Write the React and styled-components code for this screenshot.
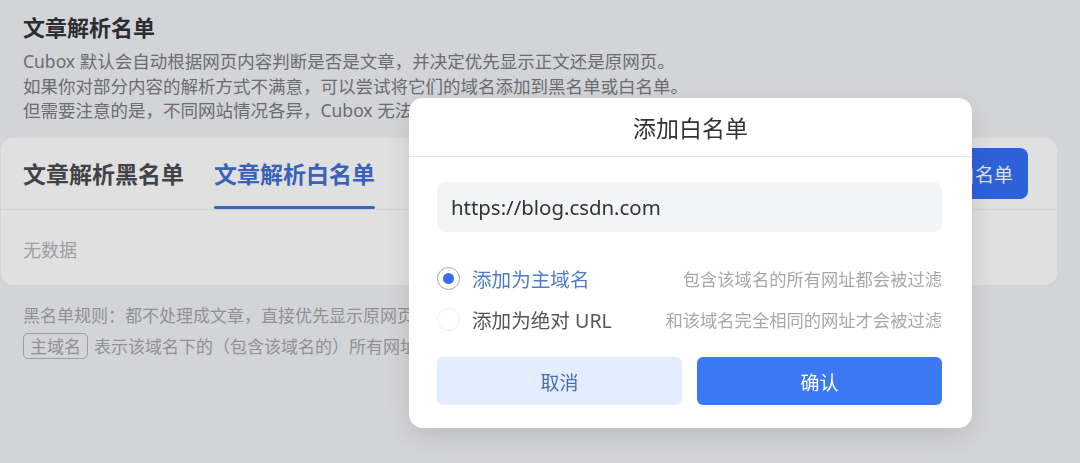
import React from "react";
import styled, { createGlobalStyle, css } from "styled-components";

const FONT = `"Noto Sans", "Noto Sans CJK SC", sans-serif`;

const GlobalStyle = createGlobalStyle`
  html, body {
    margin: 0;
    padding: 0;
    width: 1080px;
    height: 463px;
    overflow: hidden;
    background: #f1f2f5;
    font-family: ${FONT};
  }
  * { box-sizing: border-box; }
`;

const Page = styled.div`
  padding-top: 11px;
  width: 1080px;
  height: 463px;
`;

const Intro = styled.section`
  padding-left: 23px;
`;

const Title = styled.h1`
  margin: 0;
  font-size: 22px;
  line-height: 30px;
  font-weight: 700;
  color: #333437;
  font-family: "Noto Sans CJK SC", sans-serif;
`;

const Desc = styled.p`
  margin: 8px 0 0;
  font-size: 17.5px;
  line-height: 24.5px;
  color: #7a7b80;
  white-space: nowrap;
`;

const Card = styled.div`
  margin: 15px 0 0 1px;
  width: 1056px;
  background: #ffffff;
  border-radius: 12px;
  overflow: hidden;
`;

const TabBar = styled.div`
  height: 72px;
  border-bottom: 1px solid #f0f0f2;
  display: flex;
  align-items: stretch;
  justify-content: space-between;
  padding: 0 29px 0 22px;
`;

const Tabs = styled.div`
  display: flex;
  gap: 30px;
`;

const Tab = styled.div`
  position: relative;
  display: flex;
  align-items: center;
  font-family: "Noto Sans CJK SC", sans-serif;
  font-size: 23px;
  font-weight: 700;
  color: #4c4d52;
  ${(p) =>
    p.$active &&
    css`
      color: #4270d1;
      &::after {
        content: "";
        position: absolute;
        left: 0;
        right: 0;
        bottom: 0;
        height: 3px;
        border-radius: 2px;
        background: #4270d1;
      }
    `}
`;

const AddButton = styled.button`
  align-self: center;
  height: 51px;
  padding: 0 15px;
  border: none;
  border-radius: 8px;
  background: #336ff5;
  color: #ffffff;
  font-family: "Noto Sans CJK SC", sans-serif;
  font-size: 19px;
`;

const CardBody = styled.div`
  height: 75px;
  padding: 28px 0 0 22px;
  font-size: 18px;
  line-height: 24px;
  color: #b6b6ba;
`;

const Rules = styled.div`
  margin-top: 17px;
  padding-left: 23px;
  display: flex;
  flex-direction: column;
  gap: 5px;
  font-size: 17px;
  color: #a5a6aa;
  font-family: "Noto Sans CJK SC", sans-serif;
`;

const RuleLine = styled.div`
  display: flex;
  align-items: center;
  height: 26px;
  white-space: nowrap;
`;

const Tag = styled.span`
  display: inline-flex;
  align-items: center;
  height: 26px;
  padding: 0 6px;
  margin-right: 6px;
  border: 1px solid #b3b4b8;
  border-radius: 5px;
`;

const Overlay = styled.div`
  position: fixed;
  inset: 0;
  background: rgba(0, 0, 0, 0.12);
`;

const Modal = styled.div`
  position: absolute;
  left: 409px;
  top: 98px;
  width: 563px;
  background: #ffffff;
  border-radius: 14px;
  box-shadow: 0 8px 28px rgba(0, 0, 0, 0.12);
  overflow: hidden;
`;

const ModalHeader = styled.div`
  height: 59px;
  border-bottom: 1px solid #e6e6e8;
  display: flex;
  align-items: center;
  justify-content: center;
  font-family: "Noto Sans CJK SC", sans-serif;
  font-size: 23px;
  color: #333333;
`;

const ModalBody = styled.div`
  padding: 25px 30px 23px 28px;
`;

const UrlInput = styled.input`
  display: block;
  width: 100%;
  height: 50px;
  padding: 0 14px;
  border: none;
  outline: none;
  border-radius: 8px;
  background: #f3f4f6;
  font-family: ${FONT};
  font-size: 20.4px;
  color: #333333;
`;

const Options = styled.div`
  margin-top: 25.5px;
  display: flex;
  flex-direction: column;
`;

const Option = styled.label`
  height: 41px;
  display: flex;
  align-items: center;
  justify-content: space-between;
`;

const OptionMain = styled.span`
  display: flex;
  align-items: center;
  gap: 12px;
  font-size: 19.6px;
  color: ${(p) => (p.$checked ? "#4d7ccb" : "#555559")};
`;

const Radio = styled.span`
  position: relative;
  width: 23px;
  height: 23px;
  border-radius: 50%;
  border: 1.5px solid ${(p) => (p.$checked ? "#a2a7ae" : "#f0f0f2")};
  ${(p) =>
    p.$checked &&
    css`
      &::after {
        content: "";
        position: absolute;
        left: 50%;
        top: 50%;
        width: 11px;
        height: 11px;
        margin: -5.5px 0 0 -5.5px;
        border-radius: 50%;
        background: #3b6ee6;
      }
    `}
`;

const OptionHint = styled.span`
  font-family: "Noto Sans CJK SC", sans-serif;
  font-size: 17.3px;
  color: #a8a8ab;
`;

const Actions = styled.div`
  margin-top: 17.5px;
  display: flex;
  gap: 15px;
`;

const ActionButton = styled.button`
  flex: 1;
  height: 48px;
  border: none;
  border-radius: 6px;
  font-family: "Noto Sans CJK SC", sans-serif;
  font-size: 19px;
  background: ${(p) => (p.$primary ? "#3b78f2" : "#e4edfb")};
  color: ${(p) => (p.$primary ? "#ffffff" : "#4a6fae")};
`;

const options = [
  { label: "添加为主域名", hint: "包含该域名的所有网址都会被过滤", checked: true },
  { label: "添加为绝对 URL", hint: "和该域名完全相同的网址才会被过滤", checked: false },
];

export default function App() {
  return (
    <>
      <GlobalStyle />
      <Page>
        <Intro>
          <Title>文章解析名单</Title>
          <Desc>
            Cubox 默认会自动根据网页内容判断是否是文章，并决定优先显示正文还是原网页。
            <br />
            如果你对部分内容的解析方式不满意，可以尝试将它们的域名添加到黑名单或白名单。
            <br />
            但需要注意的是，不同网站情况各异，Cubox 无法保证所有网页都能正确解析。
          </Desc>
        </Intro>
        <Card>
          <TabBar>
            <Tabs>
              <Tab>文章解析黑名单</Tab>
              <Tab $active>文章解析白名单</Tab>
            </Tabs>
            <AddButton>添加白名单</AddButton>
          </TabBar>
          <CardBody>无数据</CardBody>
        </Card>
        <Rules>
          <RuleLine>黑名单规则：都不处理成文章，直接优先显示原网页。</RuleLine>
          <RuleLine>
            <Tag>主域名</Tag>表示该域名下的（包含该域名的）所有网址。
          </RuleLine>
        </Rules>
      </Page>
      <Overlay>
        <Modal>
          <ModalHeader>添加白名单</ModalHeader>
          <ModalBody>
            <UrlInput readOnly value="https://blog.csdn.com" />
            <Options>
              {options.map((o) => (
                <Option key={o.label}>
                  <OptionMain $checked={o.checked}>
                    <Radio $checked={o.checked} />
                    {o.label}
                  </OptionMain>
                  <OptionHint>{o.hint}</OptionHint>
                </Option>
              ))}
            </Options>
            <Actions>
              <ActionButton>取消</ActionButton>
              <ActionButton $primary>确认</ActionButton>
            </Actions>
          </ModalBody>
        </Modal>
      </Overlay>
    </>
  );
}
